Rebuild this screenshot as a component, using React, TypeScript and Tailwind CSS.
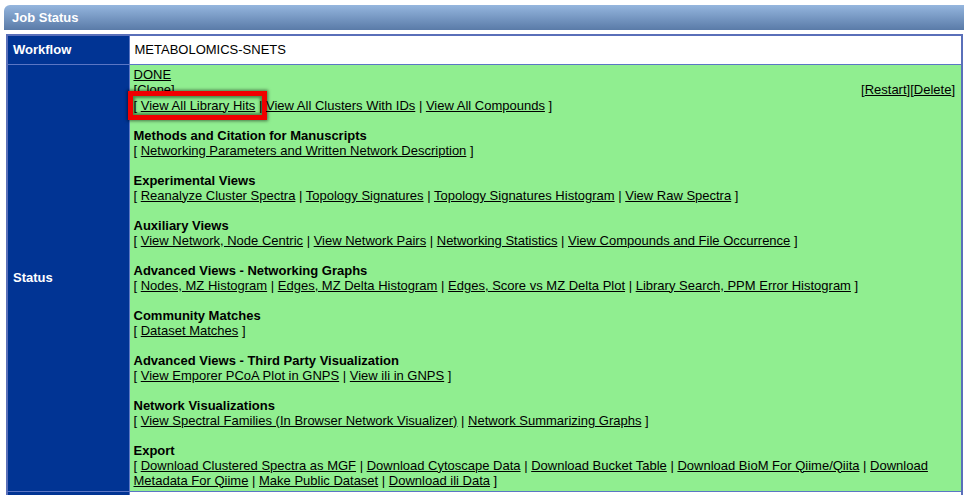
import React from "react";

const sections: { title: string; links: string[] }[] = [
  { title: "Methods and Citation for Manuscripts", links: ["Networking Parameters and Written Network Description"] },
  { title: "Experimental Views", links: ["Reanalyze Cluster Spectra", "Topology Signatures", "Topology Signatures Histogram", "View Raw Spectra"] },
  { title: "Auxiliary Views", links: ["View Network, Node Centric", "View Network Pairs", "Networking Statistics", "View Compounds and File Occurrence"] },
  { title: "Advanced Views - Networking Graphs", links: ["Nodes, MZ Histogram", "Edges, MZ Delta Histogram", "Edges, Score vs MZ Delta Plot", "Library Search, PPM Error Histogram"] },
  { title: "Community Matches", links: ["Dataset Matches"] },
  { title: "Advanced Views - Third Party Visualization", links: ["View Emporer PCoA Plot in GNPS", "View ili in GNPS"] },
  { title: "Network Visualizations", links: ["View Spectral Families (In Browser Network Visualizer)", "Network Summarizing Graphs"] },
  {
    title: "Export",
    links: [
      "Download Clustered Spectra as MGF",
      "Download Cytoscape Data",
      "Download Bucket Table",
      "Download BioM For Qiime/Qiita",
      "Download Metadata For Qiime",
      "Make Public Dataset",
      "Download ili Data",
    ],
  },
];

function LinkList({ links }: { links: string[] }) {
  return (
    <div>
      {"[ "}
      {links.map((l, i) => (
        <React.Fragment key={l}>
          <a href="#" className="underline text-black">{l}</a>
          {i < links.length - 1 ? " | " : " ]"}
        </React.Fragment>
      ))}
    </div>
  );
}

export default function App() {
  return (
    <div className="w-[970px] bg-white text-black text-[13px] leading-[15px]" style={{ fontFamily: '"Liberation Sans", Arial, sans-serif' }}>
      <div className="pt-[5px] pr-[6px] pl-[4px]">
        <div className="h-[25px] rounded-tl-[6px] bg-gradient-to-b from-[#95b6de] to-[#5a7ba8] flex items-center pl-[8px] text-white font-bold">
          Job Status
        </div>
      </div>
      <div className="pt-[4px] pl-[6px] pr-[7px]">
        <table className="w-full border-collapse border-2 border-[#5a6fb9]">
          <tbody>
            <tr className="h-[29px]">
              <td className="w-[122px] bg-[#013494] text-white font-bold pl-[5px] align-middle border border-[#5b76c4]">Workflow</td>
              <td className="bg-white pl-[5px] align-middle border border-[#5b76c4]">METABOLOMICS-SNETS</td>
            </tr>
            <tr>
              <td className="w-[122px] bg-[#013494] text-white font-bold pl-[5px] align-middle border border-[#5b76c4]">Status</td>
              <td className="bg-[#90ee90] pl-[4px] pr-[6px] pt-[2px] pb-[3px] align-top border border-[#5b76c4]">
                <div className="relative">
                  <div><a href="#" className="underline">DONE</a></div>
                  <div className="flex justify-between">
                    <span>[<a href="#" className="underline">Clone</a>]</span>
                    <span>[<a href="#" className="underline">Restart</a>][<a href="#" className="underline">Delete</a>]</span>
                  </div>
                  <div
                    className="absolute left-[-6px] top-[24px] w-[139px] h-[29px] border-[5px] border-[#f00000] bg-[#90ee90] z-[5] shadow-[0_0_3px_1px_rgba(0,0,0,0.5),inset_0_0_3px_2px_rgba(0,40,0,0.5)]"
                  />
                  <div className="relative z-10 pt-[1px]">
                    <LinkList links={["View All Library Hits", "View All Clusters With IDs", "View All Compounds"]} />
                  </div>
                  {sections.map((s) => (
                    <div key={s.title} className="mt-[15px]">
                      <div className="font-bold">{s.title}</div>
                      <LinkList links={s.links} />
                    </div>
                  ))}
                </div>
              </td>
            </tr>
            <tr className="h-[29px]">
              <td className="w-[122px] bg-[#013494] text-white font-bold pl-[5px] align-middle border border-[#5b76c4]">Description</td>
              <td className="bg-white pl-[5px] align-middle border border-[#5b76c4]">&nbsp;</td>
            </tr>
          </tbody>
        </table>
      </div>
    </div>
  );
}
